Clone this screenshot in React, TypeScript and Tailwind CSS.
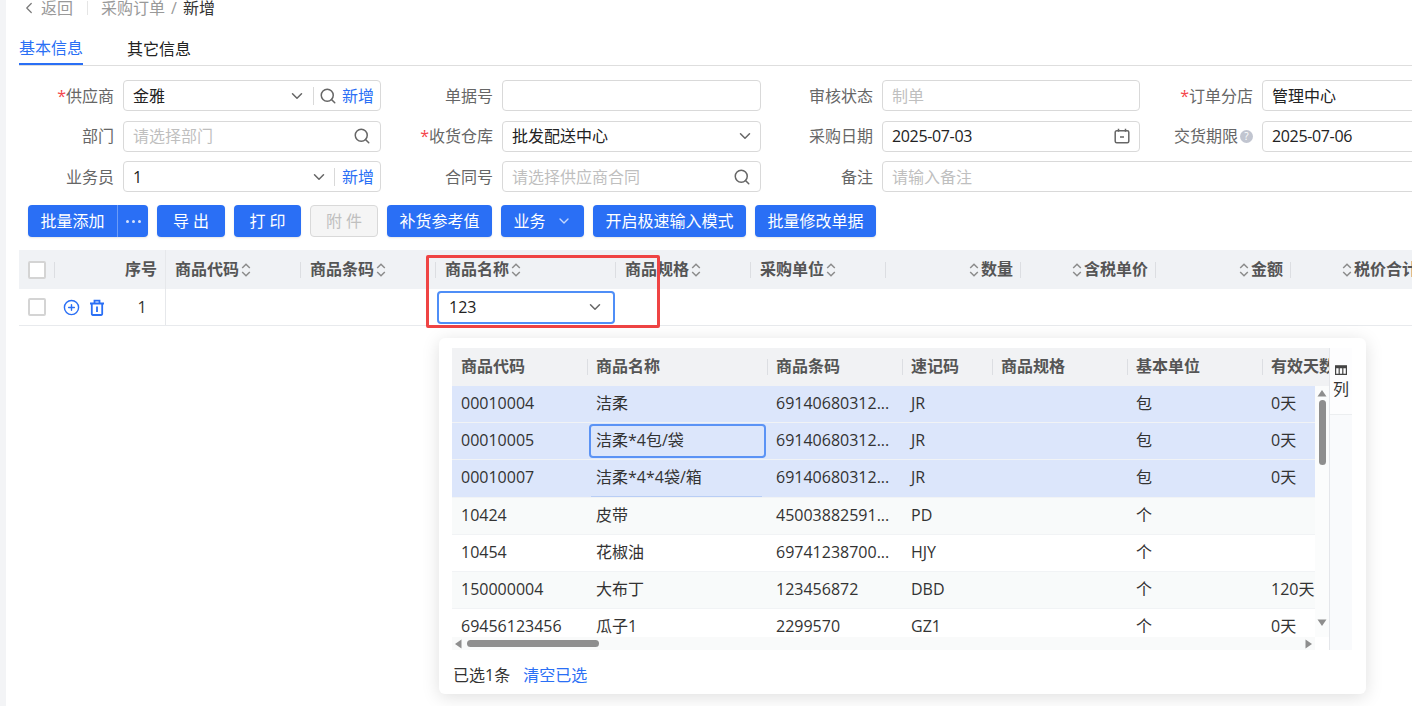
import { ChevronDown, ChevronLeft, Search, CirclePlus } from 'lucide-react'
import type { ReactNode } from 'react'

const blue = 'text-[#2a6ff5]'

function Req() {
  return <span className="text-[#f5454b]">*</span>
}

function Field({ label, children, wide, className }: { label: ReactNode; children: ReactNode; wide?: boolean; className?: string }) {
  return (
    <div className={`flex items-center h-[31px] ${wide ? 'col-span-2' : ''} ${className ?? ''}`}>
      <div className="w-[95px] shrink-0 text-right text-[#666] whitespace-nowrap">{label}</div>
      <div className="ml-[9px] flex-1 h-full min-w-0 border border-[#d9d9d9] rounded-[4px] bg-white flex items-center pl-[9px] pr-[6px]">
        {children}
      </div>
    </div>
  )
}

function Divider({ className }: { className: string }) {
  return <span className={`w-px h-[18px] bg-[#d9d9d9] ${className}`} />
}

function Add() {
  return <span className={`${blue} whitespace-nowrap`}>新增</span>
}

function Placeholder({ text }: { text: string }) {
  return <span className="flex-1 text-[#bfbfbf] whitespace-nowrap">{text}</span>
}

function Value({ text, className }: { text: string; className?: string }) {
  return <span className={`flex-1 text-[#222] whitespace-nowrap ${className ?? ''}`}>{text}</span>
}

function Btn({ children, className }: { children: ReactNode; className: string }) {
  return (
    <div className={`h-[32px] rounded-[4px] bg-[#2a6ff5] text-white flex items-center justify-center whitespace-pre shadow-[0_1px_2px_rgba(0,0,0,0.1)] ${className}`}>
      {children}
    </div>
  )
}

function Sort() {
  return (
    <svg width="10" height="16" viewBox="0 0 10 16" fill="none" stroke="#8c8c8c" strokeWidth="1.5" className="shrink-0">
      <path d="M1.2 6 5 2.2 8.8 6" />
      <path d="M1.2 10 5 13.8 8.8 10" />
    </svg>
  )
}

function Sep() {
  return <span className="w-px h-[16px] bg-[#dcdee2] shrink-0" />
}

function HeadCell({ title, w, right, iconFirst }: { title: string; w: string; right?: boolean; iconFirst?: boolean }) {
  return (
    <>
      <Sep />
      <div className={`${w} shrink-0 flex items-center ${right ? 'justify-end pr-[7px]' : 'pl-[9px]'} font-semibold text-[#555]`}>
        {iconFirst && <span className="mr-[2px]"><Sort /></span>}
        <span className="whitespace-nowrap pb-[2px]">{title}</span>
        {!iconFirst && <span className="ml-[2px]"><Sort /></span>}
      </div>
    </>
  )
}

function Checkbox() {
  return <div className="w-[18px] h-[18px] border-2 border-[#d4d4d4] rounded-[2px] bg-white shrink-0" />
}

const popupCols = [
  { title: '商品代码', w: 'w-[135px]' },
  { title: '商品名称', w: 'w-[180px]' },
  { title: '商品条码', w: 'w-[135px]' },
  { title: '速记码', w: 'w-[90px]' },
  { title: '商品规格', w: 'w-[135px]' },
  { title: '基本单位', w: 'w-[135px]' },
  { title: '有效天数', w: 'w-[68px]' },
]

const rows = [
  { c: ['00010004', '洁柔', '69140680312...', 'JR', '', '包', '0天'], bg: 'bg-[#dce6fb]' },
  { c: ['00010005', '洁柔*4包/袋', '69140680312...', 'JR', '', '包', '0天'], bg: 'bg-[#dce6fb]', focus: true },
  { c: ['00010007', '洁柔*4*4袋/箱', '69140680312...', 'JR', '', '包', '0天'], bg: 'bg-[#dce6fb]', under: true },
  { c: ['10424', '皮带', '45003882591...', 'PD', '', '个', ''], bg: 'bg-[#f8fafa]' },
  { c: ['10454', '花椒油', '69741238700...', 'HJY', '', '个', ''], bg: 'bg-white' },
  { c: ['150000004', '大布丁', '123456872', 'DBD', '', '个', '120天'], bg: 'bg-[#f8fafa]' },
  { c: ['69456123456', '瓜子1', '2299570', 'GZ1', '', '个', '0天'], bg: 'bg-white' },
]

function Popup() {
  return (
    <div className="absolute left-[439px] top-[338px] w-[927px] h-[356px] bg-white rounded-[6px] shadow-[0_3px_18px_rgba(0,0,0,0.13)] pl-[13px] pt-[10px]">
      <div className="flex h-[302px] w-[900px]">
        <div className="w-[877px] h-full flex flex-col overflow-hidden">
          <div className="h-[38px] shrink-0 flex items-center bg-[#f1f2f4] font-semibold text-[#555]">
            {popupCols.map((col, i) => (
              <div key={col.title} className={`${col.w} shrink-0 flex items-center whitespace-nowrap`}>
                {i > 0 && <Sep />}
                <span className={`pb-[2px] ${i > 0 ? 'pl-[8px]' : 'pl-[9px]'}`}>{col.title}</span>
              </div>
            ))}
          </div>
          <div className="flex h-[251px] shrink-0">
            <div className="w-[863px] overflow-hidden">
              {rows.map((row) => (
                <div key={row.c[0]} className={`h-[37.2px] flex items-center border-b border-[#f1f3f5] text-[#333] ${row.bg}`}>
                  {row.c.map((text, i) => (
                    <div key={i} className={`${popupCols[i].w} shrink-0 h-full relative flex items-center whitespace-nowrap`}>
                      {row.focus && i === 1 ? (
                        <div className="ml-[2px] w-[177px] h-[34px] border-2 border-[#5b93f5] rounded-[4px] pl-[5px] pb-[2px] flex items-center">{text}</div>
                      ) : (
                        <span className="pl-[9px] pb-[2px]">{text}</span>
                      )}
                      {row.under && i === 1 && <span className="absolute bottom-0 left-[4px] right-[5px] h-px bg-[#b9cef5]" />}
                    </div>
                  ))}
                </div>
              ))}
            </div>
            <div className="w-[14px] bg-[#fbfcfc] flex flex-col items-center pt-[4px]">
              <svg width="10" height="7" viewBox="0 0 10 7" fill="#8e8e8e"><path d="M5 0 9.5 6.5H.5z" /></svg>
              <div className="w-[7px] h-[65px] mt-[3px] rounded-full bg-[#8e8e8e]" />
              <svg width="10" height="7" viewBox="0 0 10 7" fill="#8e8e8e" className="mt-[154px]"><path d="M5 7 .5.5h9z" /></svg>
            </div>
          </div>
          <div className="h-[13px] shrink-0 w-[863px] bg-[#f9fafa] flex items-center pl-[3px]">
            <svg width="7" height="10" viewBox="0 0 7 10" fill="#8e8e8e"><path d="M0 5 6.5.5v9z" /></svg>
            <div className="w-[132px] h-[7px] ml-[5px] rounded-full bg-[#8e8e8e]" />
            <svg width="7" height="10" viewBox="0 0 7 10" fill="#8e8e8e" className="ml-auto mr-[3px]"><path d="M7 5 .5.5v9z" /></svg>
          </div>
        </div>
        <div className="w-[23px] h-full border-l border-[#e4e6ea] bg-[#f9fafc]">
          <div className="h-[67px] border-b border-[#eceef0] bg-white/60 pt-[17px] pl-[3px] text-[#333]">
            <svg width="12" height="10" viewBox="0 0 12 10" fill="none" stroke="#444" strokeWidth="1.2" className="ml-[2px]">
              <path d="M.6 3v6.4h10.8V3M4.2 3v6M7.8 3v6" />
              <path d="M.6.8h10.8v1.8H.6z" fill="#444" />
            </svg>
            <div className="leading-[20px] mt-[4px]">列</div>
          </div>
        </div>
      </div>
      <div className="flex items-center mt-[15px] leading-[20px]">
        <span className="text-[#333] ml-[1px]">已选1条</span>
        <span className={`${blue} ml-[13px]`}>清空已选</span>
      </div>
    </div>
  )
}

export default function App() {
  return (
    <div className="relative w-[1412px] h-[706px] overflow-hidden bg-white flex text-[16px] leading-[22px] font-['Open_Sans','Noto_Sans_CJK_SC','Liberation_Sans',sans-serif]">
      <div className="w-[6px] shrink-0 bg-[#f3f4f6]" />
      <div className="flex-1 min-w-0 pl-[13px]">
        <div className="h-[16px] leading-[16px] flex items-center whitespace-nowrap text-[#999] pl-[1px]">
          <ChevronLeft size={18} strokeWidth={1.6} className="text-[#777]" />
          <span className="ml-[3px]">返回</span>
          <span className="w-px h-[14px] bg-[#e5e5e5] ml-[14px]" />
          <span className="ml-[13px]">采购订单</span>
          <span className="mx-[6px]">/</span>
          <span className="text-[#333]">新增</span>
        </div>

        <div className="mt-[16px] h-[34px] flex gap-[44px] border-b border-[#dedede] w-[1400px]">
          <div className={`h-[33px] border-b-2 border-[#2a6ff5] ${blue} flex items-center`}>基本信息</div>
          <div className="h-[33px] text-[#222] flex items-center">其它信息</div>
        </div>

        <div className="mt-[14px] w-[1500px] grid grid-cols-[362px_363px_362px_400px] gap-x-[17px] gap-y-[9.5px]">
          <Field label={<><Req />供应商</>}>
            <Value text="金雅" />
            <ChevronDown size={18} className="text-[#666]" />
            <Divider className="ml-[7px] mr-[5px]" />
            <Search size={18} className="text-[#666] mr-[5px]" />
            <Add />
          </Field>
          <Field label="单据号"><span /></Field>
          <Field label="审核状态"><Placeholder text="制单" /></Field>
          <Field label={<><Req />订单分店</>} className="pl-[1px]"><Value text="管理中心" /></Field>

          <Field label="部门">
            <Placeholder text="请选择部门" />
            <Search size={18} className="text-[#666] mr-[3px]" />
          </Field>
          <Field label={<><Req />收货仓库</>}>
            <Value text="批发配送中心" />
            <ChevronDown size={18} className="text-[#666]" />
          </Field>
          <Field label="采购日期">
            <Value text="2025-07-03" className="tracking-[-0.35px]" />
            <svg width="16" height="16" viewBox="0 0 16 16" fill="none" stroke="#666" strokeWidth="1.5" className="mr-[3px]">
              <rect x="1.2" y="2.8" width="13.6" height="12" rx="1.5" />
              <path d="M4.5.8v3M11.5.8v3M6 9h4" />
            </svg>
          </Field>
          <Field
            className="pl-[1px]"
            label={
              <span className="inline-flex items-center justify-end">
                交货期限
                <span className="ml-[2px] w-[13px] h-[13px] rounded-full bg-[#c1c5d0] text-white text-[10px] leading-[13px] text-center">?</span>
              </span>
            }
          >
            <Value text="2025-07-06" className="tracking-[-0.35px]" />
          </Field>

          <Field label="业务员">
            <Value text="1" />
            <ChevronDown size={18} className="text-[#666]" />
            <Divider className="ml-[6px] mr-[7px]" />
            <Add />
          </Field>
          <Field label="合同号">
            <Placeholder text="请选择供应商合同" />
            <Search size={18} className="text-[#666] mr-[3px]" />
          </Field>
          <Field label="备注" wide><Placeholder text="请输入备注" /></Field>
        </div>

        <div className="mt-[13px] ml-[9px] flex gap-[9px]">
          <Btn className="w-[120px]">
            <span className="w-[89px] text-center">批量添加</span>
            <span className="w-[31px] h-full border-l border-[#6c9cf8] flex items-center justify-center gap-[3px]">
              <span className="w-[3px] h-[3px] rounded-full bg-[#d5e2fd]" />
              <span className="w-[3px] h-[3px] rounded-full bg-[#d5e2fd]" />
              <span className="w-[3px] h-[3px] rounded-full bg-[#d5e2fd]" />
            </span>
          </Btn>
          <Btn className="w-[68px]">导 出</Btn>
          <Btn className="w-[67px]">打 印</Btn>
          <div className="w-[68px] h-[32px] rounded-[4px] border border-[#d9d9d9] bg-[#f5f5f5] text-[#bfbfbf] flex items-center justify-center whitespace-pre">附 件</div>
          <Btn className="w-[105px]">补货参考值</Btn>
          <Btn className="w-[83px] gap-[10px]">
            业务
            <ChevronDown size={16} className="text-[#c5d8fc]" />
          </Btn>
          <Btn className="w-[153px]">开启极速输入模式</Btn>
          <Btn className="w-[121px]">批量修改单据</Btn>
        </div>

        <div className="mt-[13px] w-[1440px]">
          <div className="h-[39px] flex items-center bg-[#f0f2f5]">
            <div className="w-[35px] shrink-0 pl-[9px]"><Checkbox /></div>
            <Sep />
            <div className="w-[111px] h-full shrink-0 border-r border-[#e6e8eb] flex items-center justify-end pr-[8px] pb-[2px] font-semibold text-[#555]">序号</div>
            <div className="w-[134px] shrink-0 pl-[9px] flex items-center font-semibold text-[#555]">
              <span className="pb-[2px]">商品代码</span>
              <span className="ml-[2px]"><Sort /></span>
            </div>
            <HeadCell title="商品条码" w="w-[134px]" />
            <HeadCell title="商品名称" w="w-[179px]" />
            <HeadCell title="商品规格" w="w-[134px]" />
            <HeadCell title="采购单位" w="w-[134px]" />
            <HeadCell title="数量" w="w-[134px]" right iconFirst />
            <HeadCell title="含税单价" w="w-[134px]" right iconFirst />
            <HeadCell title="金额" w="w-[134px]" right iconFirst />
            <HeadCell title="税价合计" w="w-[134px]" right iconFirst />
          </div>
          <div className="h-[37px] flex items-center border-b border-[#e8eaed]">
            <div className="w-[35px] shrink-0 pl-[9px]"><Checkbox /></div>
            <div className="w-[65px] shrink-0 flex items-center pl-[9px] gap-[9px]">
              <CirclePlus size={17} strokeWidth={2} className="text-[#2a6ff5]" />
              <svg width="16" height="17" viewBox="0 0 16 17" fill="none" stroke="#2a6ff5" strokeWidth="1.8">
                <path d="M1 4.5h14M5.5 4.5V1.6h5v2.9M2.8 4.5v10.6a.9.9 0 0 0 .9.9h8.6a.9.9 0 0 0 .9-.9V4.5M8 7.5v5.5" />
              </svg>
            </div>
            <div className="w-[47px] h-full shrink-0 border-r border-[#e6e8eb] flex items-center justify-center text-[#333]">1</div>
            <div className="w-[269px] shrink-0" />
            <div className="ml-[2px] w-[178px] h-[33px] border-2 border-[#4f8ef7] rounded-[4px] flex items-center pl-[10px] pr-[9px] text-[#222]">
              <span className="flex-1">123</span>
              <ChevronDown size={18} className="text-[#666]" />
            </div>
          </div>
        </div>
      </div>

      <div className="absolute left-[426px] top-[255px] w-[234px] h-[73px] border-[3px] border-[#ef4444] rounded-[2px]" />
      <Popup />
    </div>
  )
}
